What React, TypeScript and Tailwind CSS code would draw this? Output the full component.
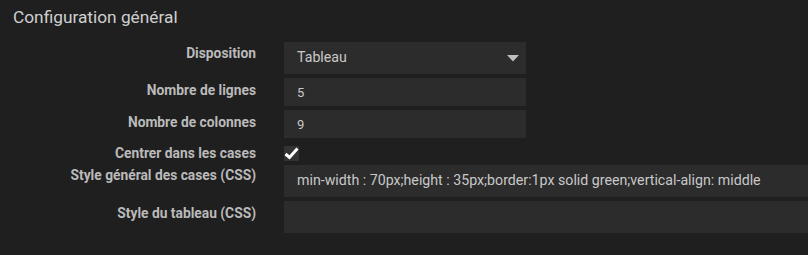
export default function App() {
  const rows = [
    { label: "Nombre de lignes", value: "5" },
    { label: "Nombre de colonnes", value: "9" },
  ];

  return (
    <div className="w-[808px] h-[255px] overflow-hidden bg-[#1f1f1f] font-['Roboto',sans-serif] text-[#c8c8c8]">
      <h2 className="pl-[13px] pt-[6px] text-[17.3px] leading-[22px] text-[#cfcfcf]">Configuration général</h2>

      <div className="mt-[14px] flex flex-col">
        {/* Disposition */}
        <div className="flex items-start">
          <label className="w-[256px] shrink-0 pt-[2px] text-right text-[13.8px] font-bold leading-[18px] text-[#bababa]">
            Disposition
          </label>
          <div className="ml-[28px] flex h-[32px] w-[242px] items-center justify-between bg-[#2c2c2c] pl-[13px] pr-[7px] text-[14.2px]">
            <span>Tableau</span>
            <svg width="12" height="7" viewBox="0 0 12 7">
              <polygon points="0,0 12,0 6,6.5" fill="#bdbdbd" />
            </svg>
          </div>
        </div>

        {rows.map((r, i) => (
          <div key={i} className="mt-[4px] flex items-start">
            <label className="w-[256px] shrink-0 pt-[3px] text-right text-[13.8px] font-bold leading-[18px] text-[#bababa]">
              {r.label}
            </label>
            <div className="ml-[28px] flex h-[28px] w-[242px] items-center bg-[#2c2c2c] pl-[13px] pt-[2px] text-[13px]">
              {r.value}
            </div>
          </div>
        ))}

        {/* Centrer */}
        <div className="mt-[6px] flex items-start">
          <label className="w-[256px] shrink-0 text-right text-[13.8px] font-bold leading-[18px] text-[#bababa]">
            Centrer dans les cases
          </label>
          <div className="ml-[28px] mt-[2px] flex h-[15px] w-[15px] items-center justify-center bg-[#333333]">
            <svg width="15" height="13" viewBox="0 0 15 13">
              <path d="M1.5 7 L5.5 10.5 L13.5 1.5" stroke="#ffffff" strokeWidth="3" fill="none" />
            </svg>
          </div>
        </div>

        {/* Style général */}
        <div className="mt-[3px] flex items-start">
          <label className="w-[256px] shrink-0 pt-[1px] text-right text-[13.8px] font-bold leading-[18px] text-[#bababa]">
            Style général des cases (CSS)
          </label>
          <div className="ml-[28px] flex h-[32px] w-[540px] shrink-0 items-center bg-[#2c2c2c] pl-[13px] text-[14.2px]">
            min-width : 70px;height : 35px;border:1px solid green;vertical-align: middle
          </div>
        </div>

        {/* Style tableau */}
        <div className="mt-[4px] flex items-start">
          <label className="w-[256px] shrink-0 pt-[3px] text-right text-[13.8px] font-bold leading-[18px] text-[#bababa]">
            Style du tableau (CSS)
          </label>
          <div className="ml-[28px] h-[32px] w-[540px] shrink-0 bg-[#2c2c2c]" />
        </div>
      </div>
    </div>
  );
}
